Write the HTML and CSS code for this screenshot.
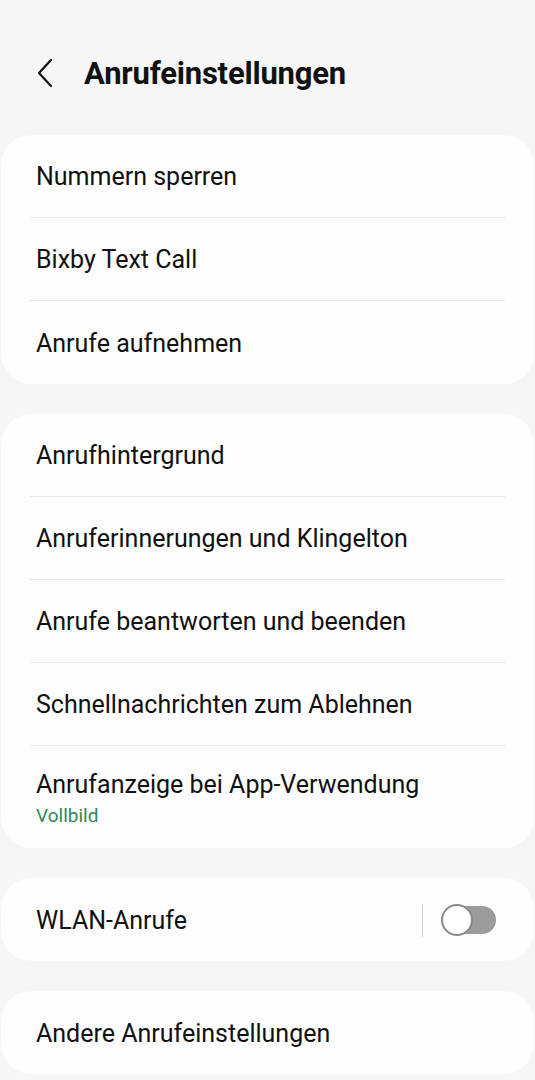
FILE: index.html
```html
<!DOCTYPE html>
<html lang="de">
<head>
  <meta charset="UTF-8" />
  <meta name="viewport" content="width=device-width, initial-scale=1.0"/>
  <title>Anrufeinstellungen</title>
  <link rel="stylesheet" href="styles.css">
</head>
<body>
  <header class="top-bar">
    <svg class="back" width="20" height="30" viewBox="0 0 20 30">
      <path d="M15 2 L3 15 L15 28" fill="none" stroke="#111" stroke-width="2.2" stroke-linecap="round" stroke-linejoin="round"/>
    </svg>
    <h1>Anrufeinstellungen</h1>
  </header>

  <div class="card">
    <div class="row">Nummern sperren</div>
    <div class="row">Bixby Text Call</div>
    <div class="row">Anrufe aufnehmen</div>
  </div>

  <div class="card">
    <div class="row">Anrufhintergrund</div>
    <div class="row">Anruferinnerungen und Klingelton</div>
    <div class="row">Anrufe beantworten und beenden</div>
    <div class="row">Schnellnachrichten zum Ablehnen</div>
    <div class="row tall">
      <span>Anrufanzeige bei App-Verwendung</span>
      <span class="sub">Vollbild</span>
    </div>
  </div>

  <div class="card">
    <div class="row switch-row">
      <span>WLAN-Anrufe</span>
      <span class="sep"></span>
      <span class="toggle"><span class="knob"></span></span>
    </div>
  </div>

  <div class="card">
    <div class="row">Andere Anrufeinstellungen</div>
  </div>
</body>
</html>
```

FILE: styles.css
```css
body {
  margin: 0;
  background: #f6f6f6;
  font-family: Roboto, "Noto Sans", sans-serif;
  color: #111;
}
.top-bar {
  display: flex;
  align-items: center;
  height: 135px;
  padding: 12px 0 0 36px;
  box-sizing: border-box;
}
.back {
  margin-right: 28px;
  margin-top: -2px;
}
h1 {
  margin: 0;
  font-size: 31px;
  font-weight: 700;
  letter-spacing: -0.2px;
}
.card {
  background: #fdfdfd;
  border-radius: 30px;
  margin: 0 1px 30px;
  padding: 0 29px;
}
.row {
  height: 83px;
  display: flex;
  align-items: center;
  padding: 1px 6px 0;
  font-size: 25px;
  border-bottom: 1px solid #e8e8e8;
  box-sizing: border-box;
}
.row:last-child {
  border-bottom: none;
}
.row.tall {
  height: 102px;
  flex-direction: column;
  align-items: flex-start;
  justify-content: center;
  padding-top: 2px;
}
.sub {
  font-size: 19px;
  color: #2e8b57;
  margin-top: 5px;
}
.switch-row span:first-child {
  flex: 1;
}
.sep {
  width: 1px;
  height: 33px;
  background: #cfcfcf;
  margin-right: 19px;
}
.toggle {
  position: relative;
  width: 54px;
  height: 28px;
  border-radius: 14px;
  background: #9b9b9b;
  margin-right: 3px;
}
.knob {
  position: absolute;
  left: -1px;
  top: -2px;
  width: 28px;
  height: 28px;
  border-radius: 50%;
  background: #fff;
  border: 2px solid #8a8a8a;
}
```
